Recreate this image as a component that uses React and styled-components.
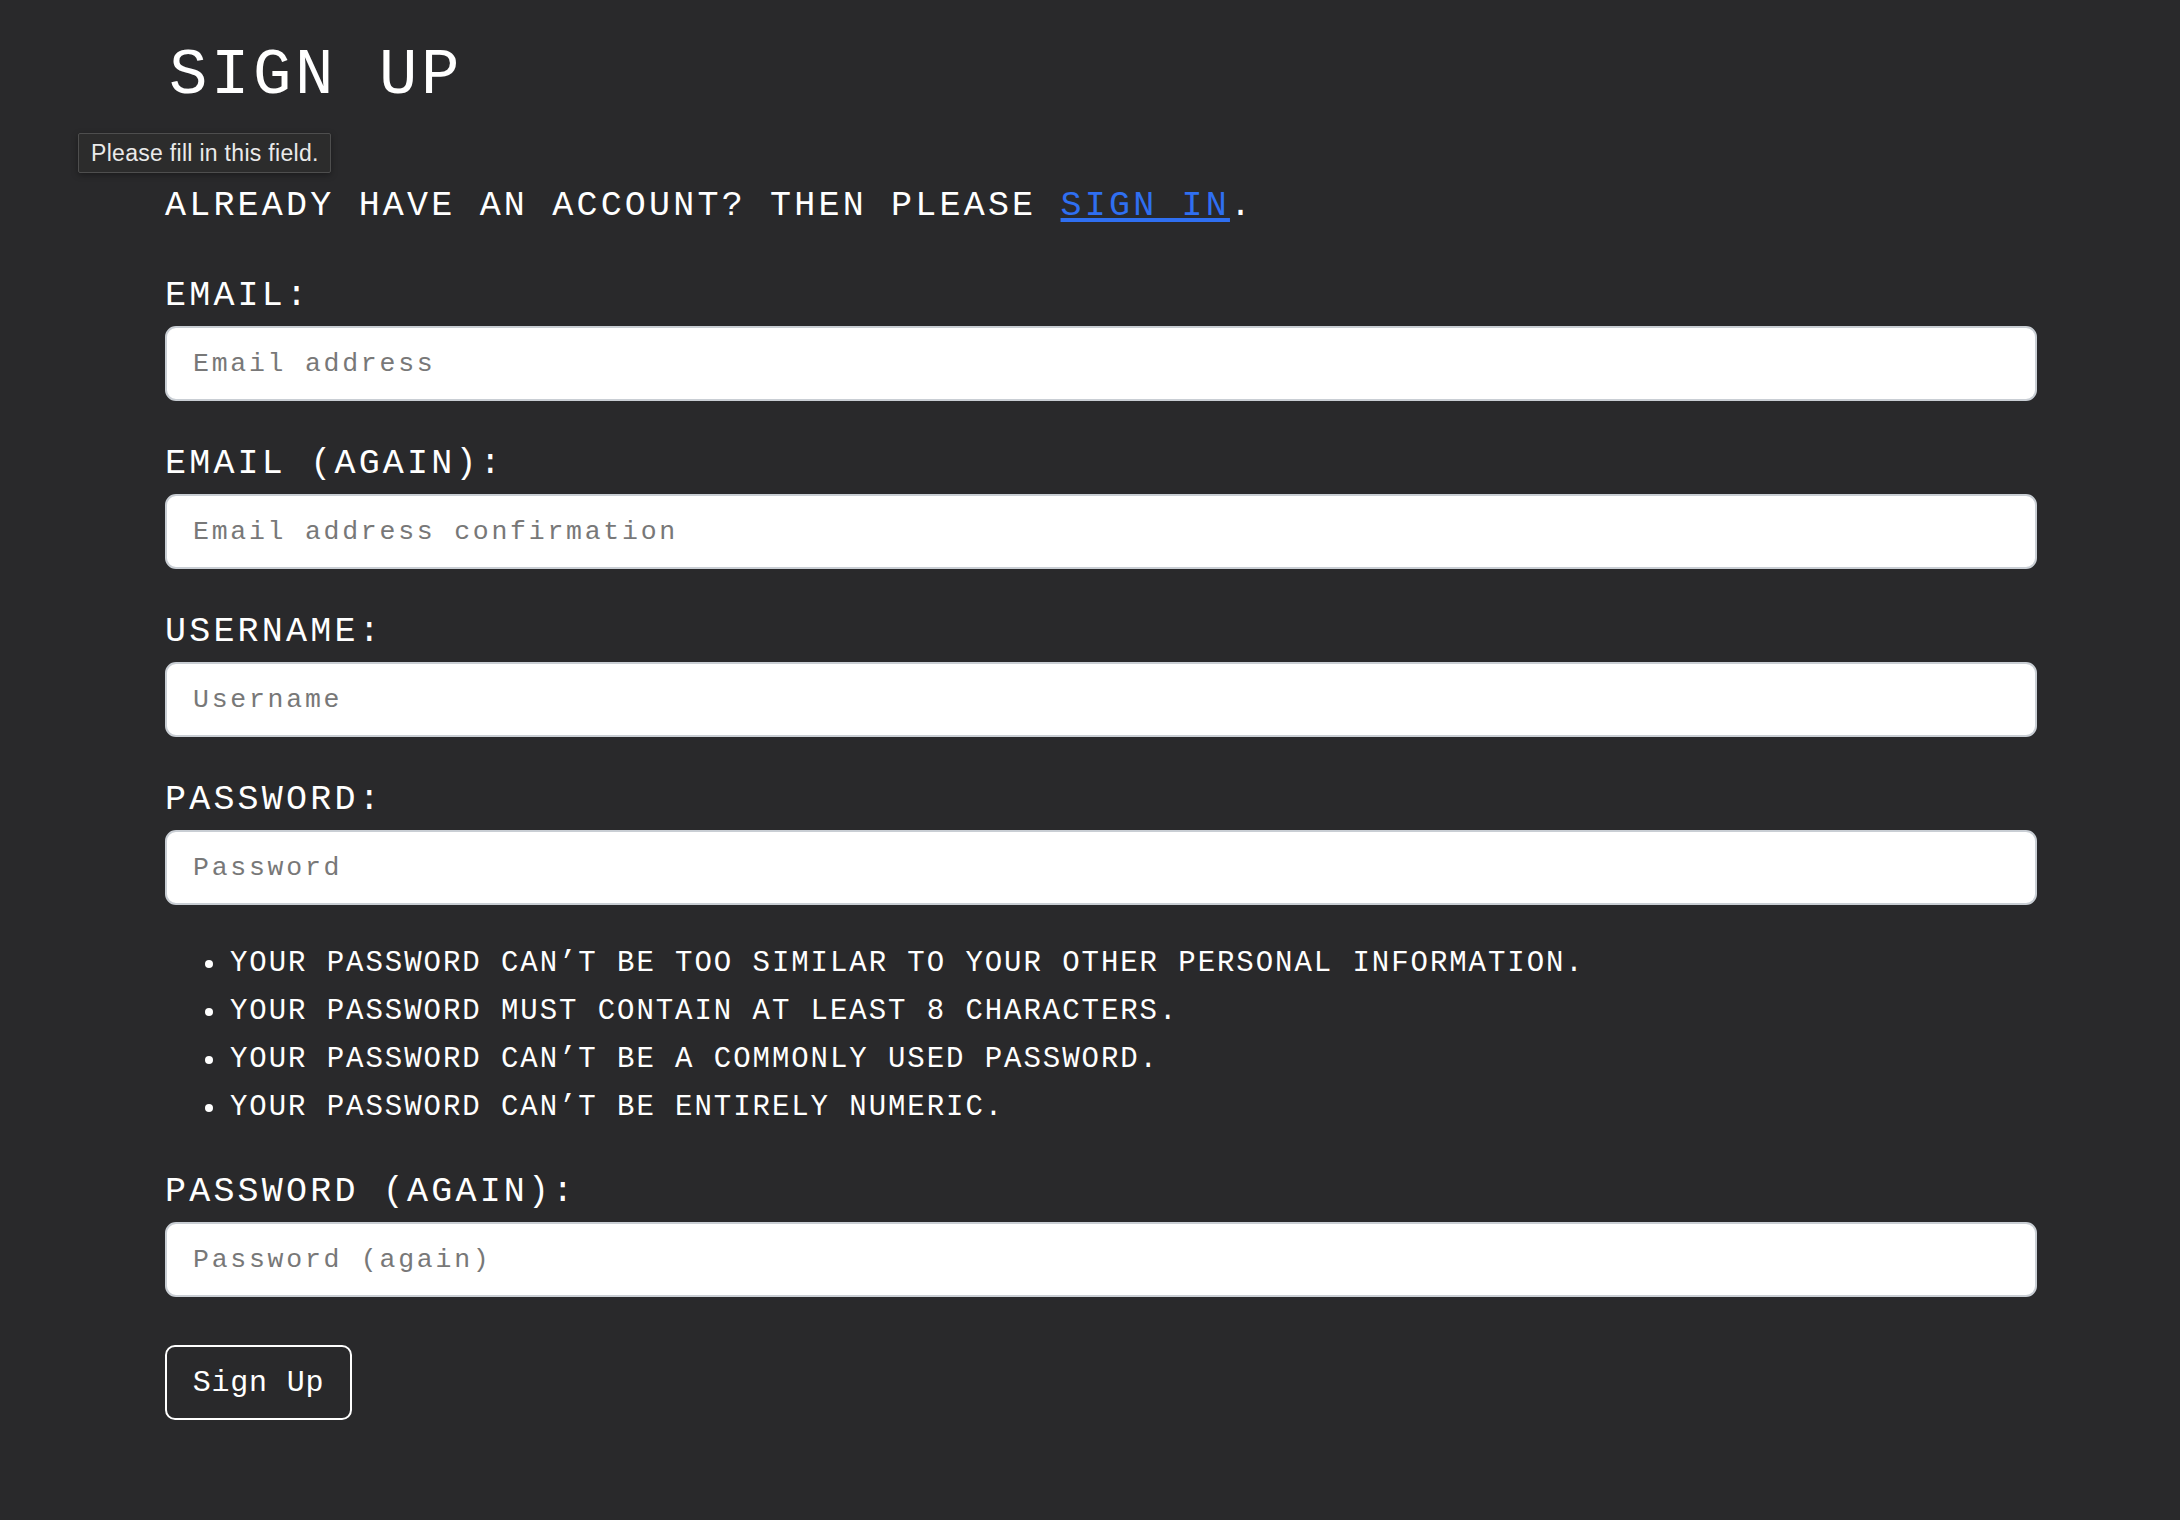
import React from "react";
import styled, { createGlobalStyle } from "styled-components";

const GlobalStyle = createGlobalStyle`
  body {
    margin: 0;
    background: #29292b;
    color: #ffffff;
    font-family: "Liberation Mono", "DejaVu Sans Mono", monospace;
  }
`;

const fields = [
  { id: "email", label: "Email:", type: "email", placeholder: "Email address" },
  { id: "email2", label: "Email (again):", type: "email", placeholder: "Email address confirmation" },
  { id: "username", label: "Username:", type: "text", placeholder: "Username" },
  { id: "password", label: "Password:", type: "password", placeholder: "Password", hints: true },
];

const hints = [
  "Your password can’t be too similar to your other personal information.",
  "Your password must contain at least 8 characters.",
  "Your password can’t be a commonly used password.",
  "Your password can’t be entirely numeric.",
];

export default function App() {
  return (
    <Page>
      <GlobalStyle />
      <Title>Sign Up</Title>
      <Tooltip>Please fill in this field.</Tooltip>
      <Intro>
        Already have an account? Then please <SignInLink href="#">sign in</SignInLink>.
      </Intro>
      <Form onSubmit={(e) => e.preventDefault()}>
        {fields.map((f) => (
          <Field key={f.id} $tight={f.hints}>
            <Label htmlFor={f.id}>{f.label}</Label>
            <Input id={f.id} type={f.type} placeholder={f.placeholder} />
          </Field>
        ))}
        <HintList>
          {hints.map((h) => (
            <Hint key={h}>
              <Dot />
              {h}
            </Hint>
          ))}
        </HintList>
        <Field>
          <Label htmlFor="password2">Password (again):</Label>
          <Input id="password2" type="password" placeholder="Password (again)" />
        </Field>
        <SubmitBtn type="submit">Sign Up</SubmitBtn>
      </Form>
    </Page>
  );
}

const Page = styled.div`
  position: relative;
  min-height: 100vh;
  box-sizing: border-box;
  padding: 34px 143px 60px 165px;
`;

const Title = styled.h1`
  margin: 0 0 0 4px;
  font-size: 64px;
  line-height: 84px;
  font-weight: 400;
  text-transform: uppercase;
  letter-spacing: 3.6px;
`;

const Tooltip = styled.div`
  position: absolute;
  left: 78px;
  top: 133px;
  padding: 0 11px 0 12px;
  height: 38px;
  display: flex;
  align-items: center;
  background: #2c2c2c;
  border: 1px solid #4e4e4e;
  border-radius: 2px;
  box-shadow: 0 2px 6px rgba(0, 0, 0, 0.35);
  color: #eaeaea;
  font-family: "Liberation Sans", Arial, sans-serif;
  font-size: 23px;
  letter-spacing: 0.3px;
`;

const Intro = styled.p`
  margin: 67px 0 0;
  font-size: 35px;
  line-height: 42px;
  letter-spacing: 3.2px;
  text-transform: uppercase;
`;

const SignInLink = styled.a`
  color: #2f6ff1;
  text-decoration: underline;
  text-decoration-thickness: 4px;
  text-underline-offset: 3px;
`;

const Form = styled.form`
  margin-top: 48px;
  display: flex;
  flex-direction: column;
  align-items: flex-start;
`;

const Field = styled.div`
  width: 100%;
  margin-bottom: ${(p) => (p.$tight ? "35px" : "42px")};
`;

const Label = styled.label`
  display: block;
  margin-bottom: 9px;
  font-size: 35px;
  line-height: 42px;
  letter-spacing: 3.2px;
  text-transform: uppercase;
`;

const Input = styled.input`
  display: block;
  width: 100%;
  height: 75px;
  box-sizing: border-box;
  padding: 0 26px;
  background: #ffffff;
  border: 2px solid #c9ced4;
  border-radius: 11px;
  color: #212529;
  font-family: "Liberation Mono", monospace;
  font-size: 26.5px;
  letter-spacing: 2.75px;
  outline: none;

  &::placeholder {
    color: #787878;
  }
`;

const HintList = styled.ul`
  margin: 0 0 39px;
  padding: 0 0 0 40px;
  list-style: none;
`;

const Hint = styled.li`
  display: flex;
  align-items: center;
  font-size: 29px;
  line-height: 48px;
  letter-spacing: 1.95px;
  text-transform: uppercase;
`;

const Dot = styled.span`
  width: 8px;
  height: 8px;
  margin-right: 17px;
  border-radius: 50%;
  background: #ffffff;
  flex-shrink: 0;
`;

const SubmitBtn = styled.button`
  margin-top: 6px;
  width: 187px;
  height: 75px;
  background: transparent;
  border: 2px solid #ffffff;
  border-radius: 10px;
  color: #ffffff;
  font-family: "Liberation Mono", monospace;
  font-size: 30px;
  letter-spacing: 0.8px;
  cursor: pointer;
`;
